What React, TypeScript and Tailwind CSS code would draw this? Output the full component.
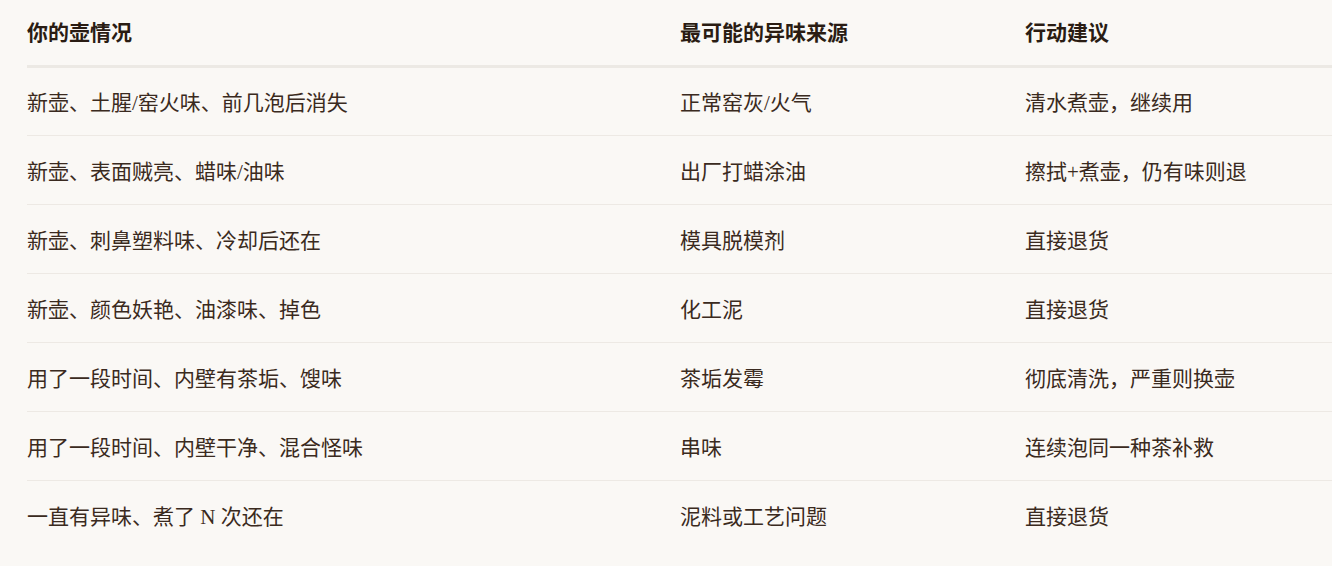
import React from "react";

const rows: [string, string, string][] = [
  ["新壶、土腥/窑火味、前几泡后消失", "正常窑灰/火气", "清水煮壶，继续用"],
  ["新壶、表面贼亮、蜡味/油味", "出厂打蜡涂油", "擦拭+煮壶，仍有味则退"],
  ["新壶、刺鼻塑料味、冷却后还在", "模具脱模剂", "直接退货"],
  ["新壶、颜色妖艳、油漆味、掉色", "化工泥", "直接退货"],
  ["用了一段时间、内壁有茶垢、馊味", "茶垢发霉", "彻底清洗，严重则换壶"],
  ["用了一段时间、内壁干净、混合怪味", "串味", "连续泡同一种茶补救"],
  ["一直有异味、煮了 N 次还在", "泥料或工艺问题", "直接退货"],
];

export default function App() {
  return (
    <div className="w-full min-h-[566px] overflow-hidden bg-[#faf8f5] pl-[27px] font-['Liberation_Serif','Noto_Sans_CJK_SC',serif] text-[21px] text-[#3a2a20]">
      <table className="w-[1400px] border-collapse table-fixed">
        <colgroup>
          <col className="w-[653px]" />
          <col className="w-[345px]" />
          <col />
        </colgroup>
        <thead>
          <tr className="border-b-[3px] border-[#ece9e4]">
            <th className="h-[66px] p-0 pt-[2px] text-left align-middle font-bold text-[#2a1c13]">你的壶情况</th>
            <th className="h-[66px] p-0 pt-[2px] text-left align-middle font-bold text-[#2a1c13]">最可能的异味来源</th>
            <th className="h-[66px] p-0 pt-[2px] text-left align-middle font-bold text-[#2a1c13]">行动建议</th>
          </tr>
        </thead>
        <tbody>
          {rows.map((r, i) => (
            <tr key={i} className={i < rows.length - 1 ? "border-b border-[#ede9e4]" : ""}>
              {r.map((c, j) => (
                <td key={j} className="h-[69px] p-0 pt-[6px] align-middle">
                  {c}
                </td>
              ))}
            </tr>
          ))}
        </tbody>
      </table>
    </div>
  );
}
